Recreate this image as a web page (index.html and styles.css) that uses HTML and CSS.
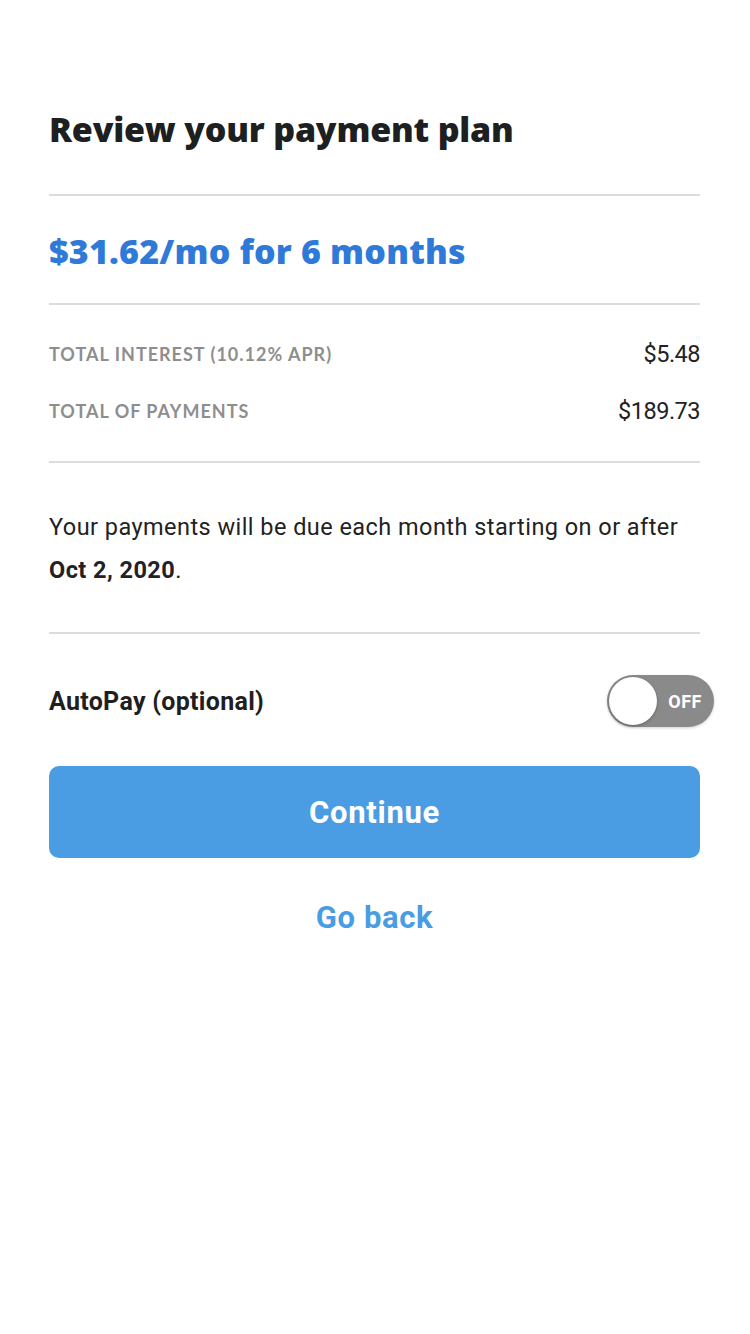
FILE: index.html
```html
<!DOCTYPE html>
<html lang="en">
<head>
<meta charset="utf-8">
<title>Review your payment plan</title>
<link rel="stylesheet" href="styles.css">
</head>
<body>
<main class="page">
  <h1 class="title">Review your payment plan</h1>
  <div class="plan">
    <h2 class="plan-amount">$31.62/mo for 6 months</h2>
  </div>
  <div class="summary">
    <div class="summary-row">
      <span class="summary-label">Total interest (10.12% APR)</span>
      <span class="summary-value">$5.48</span>
    </div>
    <div class="summary-row">
      <span class="summary-label">Total of payments</span>
      <span class="summary-value">$189.73</span>
    </div>
  </div>
  <div class="due">
    <p class="due-text">Your payments will be due each month starting on or after <strong>Oct 2, 2020</strong>.</p>
  </div>
  <div class="autopay">
    <span class="autopay-label">AutoPay (optional)</span>
    <div class="toggle">
      <span class="toggle-knob"></span>
      <span class="toggle-text">OFF</span>
    </div>
  </div>
  <button class="btn-primary" type="button">Continue</button>
  <a class="link-back" href="#">Go back</a>
</main>
</body>
</html>
```

FILE: styles.css
```css
* { box-sizing: border-box; }
html, body { margin: 0; padding: 0; background: #ffffff; }
body {
  font-family: "Roboto", "Liberation Sans", sans-serif;
  color: #1f1f21;
}
.page {
  width: 750px;
  padding: 0 50px 0 49px;
  display: flex;
  flex-direction: column;
}
.title {
  margin: 0;
  padding-top: 104px;
  padding-bottom: 40px;
  font-family: "Open Sans", "Lato", sans-serif;
  font-size: 34px;
  line-height: 50px;
  font-weight: 800;
  color: #1e1f21;
  border-bottom: 2px solid #dcdcdc;
  letter-spacing: -0.2px;
}
.plan {
  border-bottom: 2px solid #dcdcdc;
  height: 109px;
  display: flex;
  align-items: center;
}
.plan-amount {
  margin: 0;
  padding-top: 2px;
  font-family: "Open Sans", "Lato", sans-serif;
  font-size: 34px;
  line-height: 44px;
  font-weight: 800;
  color: #2f7ad8;
  letter-spacing: 0.2px;
}
.summary {
  border-bottom: 2px solid #dcdcdc;
  padding: 30px 0 31px;
  display: flex;
  flex-direction: column;
  gap: 19px;
}
.summary-row {
  display: flex;
  justify-content: space-between;
  align-items: center;
  height: 38px;
}
.summary-label {
  font-family: "Lato", "Roboto", sans-serif;
  text-transform: uppercase;
  font-size: 18px;
  font-weight: 700;
  color: #8e8e8e;
  letter-spacing: 1px;
}
.summary-value {
  font-size: 23.5px;
  font-weight: 400;
  color: #222224;
  letter-spacing: -0.5px;
}
.due {
  border-bottom: 2px solid #dcdcdc;
  padding: 43px 0 40px;
}
.due-text {
  margin: 0;
  font-size: 23.5px;
  line-height: 43px;
  letter-spacing: 0.45px;
  color: #222224;
}
.due-text strong { font-weight: 700; }
.autopay {
  display: flex;
  justify-content: space-between;
  align-items: center;
  height: 52px;
  margin-top: 41px;
}
.autopay-label {
  font-size: 25px;
  font-weight: 700;
  color: #1f1f21;
  letter-spacing: 0.3px;
}
.toggle {
  position: relative;
  width: 107px;
  height: 52px;
  margin-right: -14px;
  border-radius: 26px;
  background: #8a8a8a;
  display: flex;
  align-items: center;
  justify-content: flex-end;
  padding-right: 12px;
  box-shadow: 0 1px 3px rgba(0,0,0,0.18);
}
.toggle-knob {
  position: absolute;
  left: 2px;
  top: 2px;
  width: 48px;
  height: 48px;
  border-radius: 50%;
  background: #ffffff;
  box-shadow: 0 1px 3px rgba(0,0,0,0.3);
}
.toggle-text {
  font-size: 18px;
  font-weight: 700;
  color: #ffffff;
  letter-spacing: 0.5px;
}
.btn-primary {
  margin-top: 39px;
  height: 92px;
  width: 100%;
  border: none;
  border-radius: 10px;
  background: #4a9de3;
  color: #ffffff;
  font-family: "Roboto", "Liberation Sans", sans-serif;
  font-size: 31px;
  font-weight: 700;
  letter-spacing: 0.7px;
  cursor: pointer;
}
.link-back {
  align-self: center;
  margin-top: 40px;
  font-size: 31px;
  font-weight: 700;
  line-height: 40px;
  letter-spacing: 0.6px;
  color: #4a9de3;
  text-decoration: none;
}
```
